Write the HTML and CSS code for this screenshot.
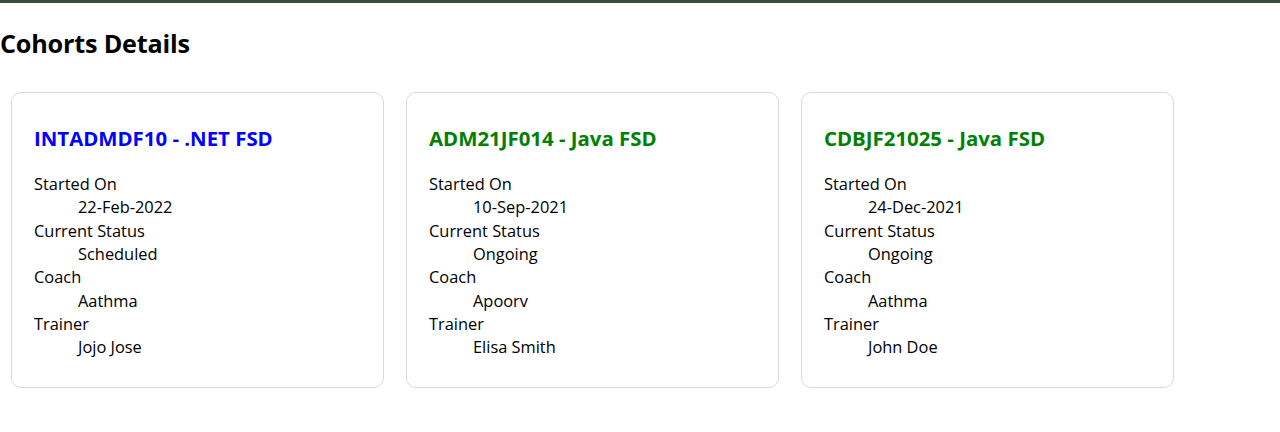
FILE: index.html
```html
<!DOCTYPE html>
<html lang="en">
<head>
<meta charset="utf-8">
<title>Cohorts Details</title>
<link rel="stylesheet" href="styles.css">
</head>
<body>
<div class="topbar"></div>
<h2 class="page-title">Cohorts Details</h2>
<div class="cohorts">
  <div class="card">
    <h3 class="card-title scheduled">INTADMDF10 - .NET FSD</h3>
    <dl class="details">
      <dt>Started On</dt><dd>22-Feb-2022</dd>
      <dt>Current Status</dt><dd>Scheduled</dd>
      <dt>Coach</dt><dd>Aathma</dd>
      <dt>Trainer</dt><dd>Jojo Jose</dd>
    </dl>
  </div>
  <div class="card">
    <h3 class="card-title ongoing">ADM21JF014 - Java FSD</h3>
    <dl class="details">
      <dt>Started On</dt><dd>10-Sep-2021</dd>
      <dt>Current Status</dt><dd>Ongoing</dd>
      <dt>Coach</dt><dd>Apoorv</dd>
      <dt>Trainer</dt><dd>Elisa Smith</dd>
    </dl>
  </div>
  <div class="card">
    <h3 class="card-title ongoing">CDBJF21025 - Java FSD</h3>
    <dl class="details">
      <dt>Started On</dt><dd>24-Dec-2021</dd>
      <dt>Current Status</dt><dd>Ongoing</dd>
      <dt>Coach</dt><dd>Aathma</dd>
      <dt>Trainer</dt><dd>John Doe</dd>
    </dl>
  </div>
</div>
</body>
</html>
```
FILE: styles.css
```css
html, body {
  margin: 0;
  padding: 0;
  background: #ffffff;
}
body {
  font-family: "Open Sans", "Noto Sans", sans-serif;
  color: #000;
}
.topbar {
  height: 3px;
  background: #3b4a3b;
}
.page-title {
  margin: 0;
  padding-top: 23px;
  height: 36px;
  line-height: 35px;
  font-size: 25.2px;
  font-weight: 700;
  letter-spacing: -0.2px;
}
.cohorts {
  display: flex;
  gap: 22px;
  padding: 30px 11px 0;
}
.card {
  width: 373px;
  box-sizing: border-box;
  border: 1px solid #d9d9d9;
  border-radius: 10px;
  padding: 32px 22px 0;
  height: 296px;
}
.card-title {
  margin: 0;
  font-size: 20.4px;
  line-height: 26px;
  font-weight: 700;
}
.scheduled { color: #0000ff; }
.ongoing { color: #008000; }
.details {
  margin: 21px 0 0;
  font-size: 16.4px;
  line-height: 23.35px;
}
.details dt { margin: 0; }
.details dd { margin: 0 0 0 44px; }
```
